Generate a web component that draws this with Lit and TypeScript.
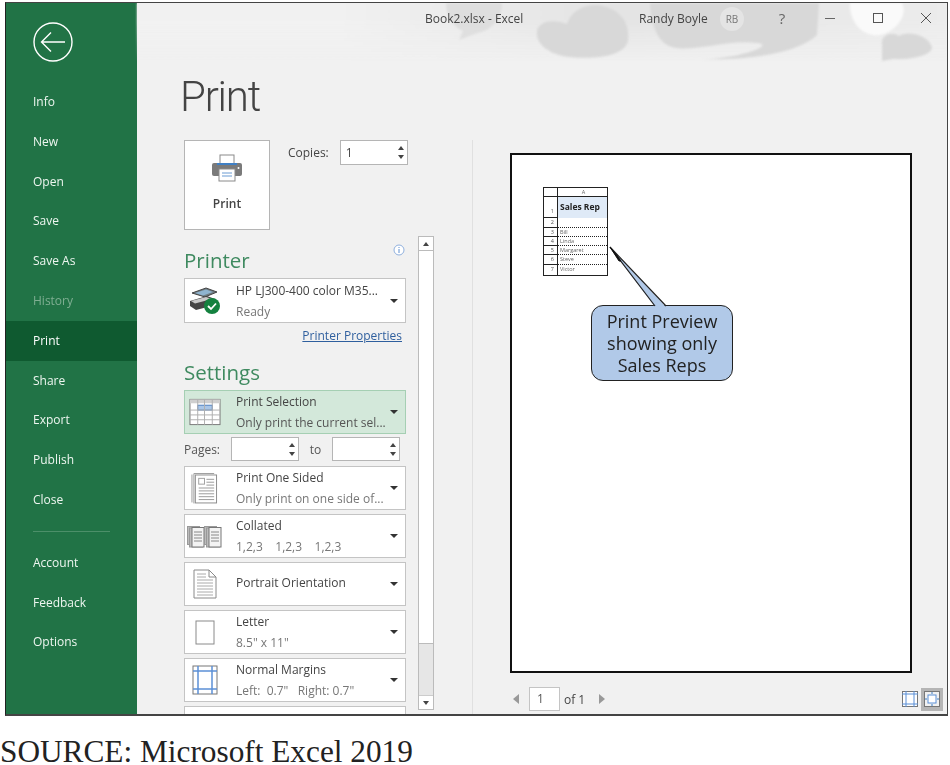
import { LitElement, html, css, svg } from 'lit';
import { customElement } from 'lit/decorators.js';

const TOP_NAV = ['Info', 'New', 'Open', 'Save', 'Save As', 'History', 'Print', 'Share', 'Export', 'Publish', 'Close'];
const BOTTOM_NAV = ['Account', 'Feedback', 'Options'];

const line = (x1: number, y1: number, x2: number, y2: number, c = '#8a8a8a', w = 1) =>
  svg`<line x1=${x1} y1=${y1} x2=${x2} y2=${y2} stroke=${c} stroke-width=${w} />`;

const ICONS: Record<string, unknown> = {
  printer: html`<svg width="32" height="28" viewBox="2 2 32 28">
    <path d="M5 8 L19 3 L30 7 L18 12Z" fill="#6f7b80" stroke="#444" />
    <path d="M8 8 L19 4.5 L26 7 L16 10.5Z" fill="#8fb4cf" />
    <path d="M3 16 L20 11 L28 14 L28 20 L9 25 L3 21Z" fill="#454545" />
    <path d="M4 16 L19 12 L25 14 L8 18.5Z" fill="#c9c9c9" />
    <circle cx="25" cy="21" r="8" fill="#14813f" />
    <path d="M21 21 L24 24 L29 18.5" fill="none" stroke="#fff" stroke-width="1.8" />
  </svg>`,
  selection: html`<svg width="32" height="28" viewBox="0 0 33 28">
    <rect x="1" y="1" width="31" height="26" fill="#fff" stroke="#777" />
    <rect x="1" y="1" width="31" height="4" fill="#cfcfcf" />
    <rect x="9" y="7" width="15" height="5" fill="#a9c6e8" stroke="#4d7fc0" />
    ${[12, 17, 22].map((y) => svg`${line(1, y, 32, y, '#b0b0b0')}`)}
    ${[9, 16, 24].map((x) => svg`${line(x, 1, x, 27, '#b0b0b0')}`)}
  </svg>`,
  oneSided: html`<svg width="27" height="34" viewBox="0 0 28 34">
    <path d="M1 32 V3 M3 33 V2 H24" fill="none" stroke="#9a9a9a" />
    <rect x="4.5" y="3.5" width="22" height="29" fill="#fff" stroke="#8a8a8a" />
    <rect x="8" y="7" width="6" height="6" fill="none" stroke="#a0a0a0" />
    ${[8, 11, 14].map((y) => svg`${line(16, y, 24, y, '#999')}`)}
    ${[17, 20, 23, 26, 29].map((y) => svg`${line(8, y, 24, y, '#999')}`)}
  </svg>`,
  collated: html`<svg width="35" height="24" viewBox="0 0 35 24">
    ${[0, 17].map((dx) => svg`
      <rect x=${dx + 0.5} y="2.5" width="12" height="18" fill="#bbb" stroke="#999" />
      <rect x=${dx + 2.5} y="4" width="13" height="19" fill="#bbb" stroke="#999" />
      <rect x=${dx + 5} y="3.5" width="12" height="19.5" fill="#f3f3f3" stroke="#777" />
      ${[8, 11, 14, 17].map((y) => line(dx + 7, y, dx + 15, y, '#888'))}
    `)}
  </svg>`,
  portrait: html`<svg width="24" height="30" viewBox="0 0 24 30">
    <path d="M1 1 H16 L23 8 V29 H1Z M16 1 V8 H23" fill="#fff" stroke="#8a8a8a" />
    ${[5, 8].map((y) => svg`${line(4, y, 13, y, '#aaa')}`)}
    ${[11, 14, 17, 20, 23, 26].map((y) => svg`${line(4, y, 20, y, '#aaa')}`)}
  </svg>`,
  letter: html`<svg width="20" height="25" viewBox="0 0 20 25">
    <rect x="1" y="1" width="18" height="23" fill="#fff" stroke="#8a8a8a" />
  </svg>`,
  margins: html`<svg width="26" height="30" viewBox="0 0 26 30">
    <rect x="1" y="1" width="24" height="28" fill="#fff" stroke="#777" />
    ${line(6, 1, 6, 29, '#5b8fd6', 1.5)}${line(20, 1, 20, 29, '#5b8fd6', 1.5)}
    ${line(1, 6, 25, 6, '#5b8fd6', 1.5)}${line(1, 24, 25, 24, '#5b8fd6', 1.5)}
  </svg>`,
};

const PRINTER = { icon: 'printer', title: 'HP LJ300-400 color M35...', sub: 'Ready' };
const SELECTION = { icon: 'selection', title: 'Print Selection', sub: 'Only print the current sel...' };
const OPTIONS = [
  { icon: 'oneSided', title: 'Print One Sided', sub: 'Only print on one side of...' },
  { icon: 'collated', title: 'Collated', sub: '1,2,3\u00a0\u00a0\u00a0\u00a01,2,3\u00a0\u00a0\u00a0\u00a01,2,3' },
  { icon: 'portrait', title: 'Portrait Orientation', sub: '' },
  { icon: 'letter', title: 'Letter', sub: '8.5" x 11"' },
  { icon: 'margins', title: 'Normal Margins', sub: 'Left:\u00a0\u00a00.7"\u00a0\u00a0\u00a0Right:\u00a00.7"' },
];
const SHEET_ROWS = ['Bill', 'Linda', 'Margaret', 'Steve', 'Victor'];

@customElement('app-root')
export class AppRoot extends LitElement {
  static styles = css`
    :host { display: block; width: 950px; height: 765px; background: #fff; font-family: 'Open Sans', 'Noto Sans', sans-serif; }
    .window { box-sizing: border-box; margin: 2px 0 0 5px; width: 943px; height: 714px; border: 1px solid #444; border-left-color: #222; border-bottom: 2px solid #444; display: flex; overflow: hidden; filter: blur(0.35px); }

    .sidebar { width: 131px; flex: none; background: #217346; color: #eef6f0; font-size: 12px; }
    .back { display: block; margin: 19px 0 20px 27px; }
    .nav-item { height: 39.8px; line-height: 39.8px; padding-left: 27px; }
    .nav-item.disabled { color: #7fae92; }
    .nav-item.active { background: #0f5a30; color: #fff; }
    .nav-rule { height: 1px; background: #4c8f69; margin: 11px 27px 11px 27px; }

    .main { flex: 1; position: relative; background: #f1f1f1; color: #444; font-size: 12px; min-width: 0; }
    .clouds { position: absolute; left: 0; top: 0; filter: blur(1px); }
    .titlebar { position: relative; height: 30px; line-height: 31px; display: flex; padding-left: 288px; color: #444; }
    .titlebar > * { flex: none; }
    .file { width: 214px; }
    .user { width: 81px; }
    .badge { width: 24px; height: 24px; line-height: 24px; margin-top: 4px; border-radius: 50%; background: #e4e4e4; color: #777; font-size: 10px; text-align: center; }
    .ctl { width: 48px; display: flex; align-items: center; justify-content: center; color: #666; font-size: 15px; }
    .ctl.first { margin-left: 14px; }

    .heading { position: relative; box-sizing: border-box; height: 107px; padding: 34px 0 0 43px; }
    h1 { margin: 0; font-family: Roboto, 'Open Sans', sans-serif; font-weight: 300; font-size: 42px; letter-spacing: -1.2px; line-height: 60px; color: #444; }

    .body { display: flex; height: 580px; padding-left: 47px; }
    .settings { width: 222px; flex: none; }
    .print-row { display: flex; height: 90px; margin-bottom: 15px; }
    .print-btn { box-sizing: border-box; flex: none; width: 86px; height: 90px; background: #fff; border: 1px solid #b5b5b5; display: flex; flex-direction: column; align-items: center; padding-top: 13px; font-weight: 600; color: #444; gap: 13px; }
    .copies { display: flex; flex: none; margin-left: 18px; gap: 11px; height: 25px; align-items: center; }
    .spin { box-sizing: border-box; background: #fff; border: 1px solid #b5b5b5; display: flex; justify-content: space-between; align-items: center; height: 25px; padding: 0 3px 0 5px; }
    .spin.copy { width: 68px; }
    .spin.range { width: 68px; height: 24px; }
    .arrows { display: flex; flex-direction: column; gap: 5px; }
    .up { width: 0; height: 0; border: 3px solid transparent; border-top: 0; border-bottom: 4px solid #444; }
    .down { width: 0; height: 0; border: 3px solid transparent; border-bottom: 0; border-top: 4px solid #444; }

    h2 { margin: 0; font-weight: 400; font-size: 20.5px; line-height: 30px; color: #3f8a60; }
    .section-head { display: flex; justify-content: space-between; margin-bottom: 3px; }
    .info { margin: -1px 1px 0 0; }
    .settings-head { margin: 12px 0 3px; }

    .drop { box-sizing: border-box; height: 45px; background: #fff; border: 1.5px solid #c4c4c4; display: flex; align-items: center; }
    .drop.small { height: 44px; }
    .drop.selected { background: #d3e8da; border-color: #a5cfb3; }
    .drop-icon { width: 39px; margin-right: 12px; flex: none; display: flex; justify-content: center; align-items: center; }
    .drop-text { flex: 1; min-width: 0; line-height: 21px; white-space: nowrap; }
    .drop-title { color: #444; font-weight: 500; }
    .drop-title.solo { margin-bottom: 3px; }
    .drop-sub { color: #777; }
    .drop.selected .drop-sub { color: #555; }
    .caret { flex: none; margin-right: 7px; width: 0; height: 0; border: 4px solid transparent; border-bottom: 0; border-top: 4px solid #333; }

    .props { text-align: right; padding-right: 4px; line-height: 18px; margin-top: 4px; color: #2f5f9e; text-decoration: underline; }
    .pages { display: flex; align-items: center; height: 24px; margin: 3px 0 5px; color: #555; }
    .pages-label { width: 47px; }
    .pages-to { width: 33px; text-align: center; }
    .stack { display: flex; flex-direction: column; gap: 4px; }

    .scroll { box-sizing: border-box; width: 16px; height: 474px; margin: 96px 0 0 12px; background: #e6e6e6; border: 1px solid #bbb; position: relative; display: flex; flex-direction: column; flex: none; }
    .scroll-btn { height: 14px; flex: none; background: #fff; display: flex; align-items: center; justify-content: center; box-sizing: border-box; }
    .scroll-btn.top { border-bottom: 1px solid #bbb; }
    .scroll-btn.bottom { border-top: 1px solid #ccc; margin-top: auto; }
    .thumb { height: 392px; background: #fff; border-bottom: 1px solid #bbb; }

    .preview { flex: 1; margin-left: 38px; border-left: 1px solid #e0e0e0; padding: 13px 0 0 37px; min-width: 0; }
    .page { box-sizing: border-box; position: relative; width: 402px; height: 520px; background: #fff; border: 2px solid #111; border-bottom-width: 2.5px; padding: 32px 0 0 31px; }
    .sheet { display: grid; grid-template-columns: 14px 49px; grid-template-rows: 9px 21px 10px 9px 9px 9px 10px 10px; width: 65px; border: 1.5px solid #222; box-sizing: border-box; font-size: 5.5px; color: #666; }
    .cell { box-sizing: border-box; border-bottom: 1px dotted #222; line-height: 8px; padding-left: 2px; white-space: nowrap; overflow: hidden; }
    .cell.num { border-right: 1.5px solid #222; border-bottom-style: solid; padding: 0 3px 0 0; text-align: right; color: #555; }
    .cell.head { border-bottom: 1px solid #222; text-align: center; }
    .cell.title { background: #dfeaf7; color: #222; font-size: 8.5px; font-weight: 700; line-height: 19px; border-bottom: 0; }
    .cell.num.tall { line-height: 28px; }
    .cell.last { border-bottom: 0; }

    .callout { position: absolute; left: 79px; top: 150px; box-sizing: border-box; width: 142px; height: 76px; background: #b1c9e8; border: 1.5px solid #222; border-radius: 12px; display: flex; align-items: center; justify-content: center; text-align: center; font-size: 18px; line-height: 22px; color: #222; }
    .pointer { position: absolute; left: 95px; top: 90px; }

    .pager { display: flex; align-items: center; width: 433px; height: 24px; margin-top: 14px; color: #444; }
    .pg-left { width: 0; height: 0; margin-left: 3px; border: 5px solid transparent; border-left: 0; border-right: 6px solid #999; }
    .pg-right { width: 0; height: 0; margin-left: 14px; border: 5px solid transparent; border-right: 0; border-left: 6px solid #999; }
    .pg-box { box-sizing: border-box; width: 31px; height: 24px; line-height: 22px; margin: 0 4px 0 10px; background: #fff; border: 1px solid #c4c4c4; padding-left: 7px; color: #555; }
    .view { margin-left: auto; display: flex; align-items: center; gap: 3px; }
    .view-on { width: 22px; height: 23px; background: #b5b5b5; display: flex; align-items: center; justify-content: center; }

    .source { margin: 23px 0 0; font-family: 'Liberation Serif', serif; font-size: 31.3px; line-height: 26px; color: #222; white-space: nowrap; }
  `;

  private option(o: { icon: string; title: string; sub: string }, cls = '') {
    return html`<div class="drop ${cls}">
      <div class="drop-icon">${ICONS[o.icon]}</div>
      <div class="drop-text">
        <div class="drop-title ${o.sub ? '' : 'solo'}">${o.title}</div>
        ${o.sub ? html`<div class="drop-sub">${o.sub}</div>` : ''}
      </div>
      <div class="caret"></div>
    </div>`;
  }

  private arrows() {
    return html`<div class="arrows"><div class="up"></div><div class="down"></div></div>`;
  }

  private sheet() {
    return html`<div class="sheet">
      <div class="cell num head"></div><div class="cell head">A</div>
      <div class="cell num tall">1</div><div class="cell title">Sales Rep</div>
      <div class="cell num">2</div><div class="cell"></div>
      ${SHEET_ROWS.map((name, i) => html`
        <div class="cell num ${i === 4 ? 'last' : ''}">${i + 3}</div>
        <div class="cell ${i === 4 ? 'last' : ''}">${name}</div>`)}
    </div>`;
  }

  render() {
    return html`
      <div class="window">
        <nav class="sidebar">
          <svg class="back" width="40" height="40" viewBox="0 0 40 40" fill="none" stroke="#fff" stroke-width="1.4">
            <circle cx="20" cy="20" r="19" />
            <path d="M32 20 H9 M18 10.5 L8.5 20 L18 29.5" />
          </svg>
          ${TOP_NAV.map((n) => html`<div class="nav-item ${n === 'Print' ? 'active' : ''} ${n === 'History' ? 'disabled' : ''}">${n}</div>`)}
          <div class="nav-rule"></div>
          ${BOTTOM_NAV.map((n) => html`<div class="nav-item">${n}</div>`)}
        </nav>

        <main class="main">
          <svg class="clouds" width="810" height="62" viewBox="0 0 810 62">
            <defs>
              <linearGradient id="band" x1="0" y1="0" x2="1" y2="0">
                <stop offset="0.25" stop-color="#f1f1f1" />
                <stop offset="0.6" stop-color="#e4e4e4" />
                <stop offset="1" stop-color="#ececec" />
              </linearGradient>
              <linearGradient id="fade" x1="0" y1="0" x2="0" y2="1">
                <stop offset="0.3" stop-color="#fff" />
                <stop offset="0.95" stop-color="#000" />
              </linearGradient>
              <mask id="fade-mask"><rect width="810" height="62" fill="url(#fade)" /></mask>
            </defs>
            <rect width="810" height="62" fill="url(#band)" mask="url(#fade-mask)" />
            <g fill="#d8d8d8">
              <path d="M309 0 C309 12 316 24 326 28 L322 37 L340 30 C354 28 365 16 365 0Z" opacity="0.7" />
              <path d="M400 28 C402 18 416 16 430 21 C434 8 446 2 460 2 C482 4 494 20 491 38 C488 52 462 57 432 54 C414 52 398 42 400 28Z" />
              <path d="M513 0 C514 20 520 40 535 44 C555 50 590 36 620 40 C640 42 600 56 565 56 C600 58 660 52 680 32 L682 0Z" />
              <path d="M745 42 C743 32 755 28 762 33 C768 28 790 30 795 44 C796 52 775 57 756 56 L745 58Z" />
            </g>
            <path d="M713 0 H765 C772 14 756 30 742 32 C725 34 712 18 713 0Z" fill="#fafafa" />
          </svg>

          <header class="titlebar">
            <span class="file">Book2.xlsx - Excel</span>
            <span class="user">Randy Boyle</span>
            <span class="badge">RB</span>
            <span class="ctl first">?</span>
            <span class="ctl"><svg width="12" height="12"><path d="M1 6.5H11" stroke="#666" /></svg></span>
            <span class="ctl"><svg width="12" height="12"><rect x="1.5" y="1.5" width="9" height="9" fill="none" stroke="#555" /></svg></span>
            <span class="ctl"><svg width="12" height="12"><path d="M1 1L11 11M11 1L1 11" stroke="#555" /></svg></span>
          </header>

          <div class="heading"><h1>Print</h1></div>

          <div class="body">
            <section class="settings">
              <div class="print-row">
                <div class="print-btn">
                  <svg width="32" height="28" viewBox="0 0 32 28">
                    <rect x="9" y="1" width="14" height="9" fill="#fff" stroke="#8a8a8a" />
                    <rect x="1" y="9" width="30" height="13" rx="2" fill="#7a7a7a" />
                    <rect x="6" y="9" width="20" height="2" fill="#3f7fc4" />
                    <rect x="8" y="15" width="16" height="12" fill="#fff" stroke="#8a8a8a" />
                    <path d="M11 19H21M11 22H21" stroke="#6b9bd3" />
                    <circle cx="27.5" cy="14" r="1" fill="#fff" />
                  </svg>
                  Print
                </div>
                <div class="copies">
                  <span>Copies:</span>
                  <div class="spin copy"><span>1</span>${this.arrows()}</div>
                </div>
              </div>

              <div class="section-head">
                <h2>Printer</h2>
                <svg class="info" width="12" height="12" viewBox="0 0 12 12">
                  <circle cx="6" cy="6" r="5" fill="#fff" stroke="#8fb0de" />
                  <path d="M6 5V9M6 3V4" stroke="#5f8fd0" />
                </svg>
              </div>
              ${this.option(PRINTER)}
              <div class="props">Printer Properties</div>

              <h2 class="settings-head">Settings</h2>
              ${this.option(SELECTION, 'small selected')}
              <div class="pages">
                <span class="pages-label">Pages:</span>
                <div class="spin range"><span></span>${this.arrows()}</div>
                <span class="pages-to">to</span>
                <div class="spin range"><span></span>${this.arrows()}</div>
              </div>
              <div class="stack">
                ${OPTIONS.map((o) => this.option(o, 'small'))}
                <div class="drop small"></div>
              </div>
            </section>

            <div class="scroll">
              <div class="scroll-btn top"><div class="up"></div></div>
              <div class="thumb"></div>
              <div class="scroll-btn bottom"><div class="down"></div></div>
            </div>

            <section class="preview">
              <div class="page">
                ${this.sheet()}
                <div class="callout"><div>Print Preview<br />showing only<br />Sales Reps</div></div>
                <svg class="pointer" width="66" height="64" viewBox="0 0 66 64">
                  <path d="M3 2 L48 62 L59 62Z" fill="#b1c9e8" />
                  <path d="M48 61 L3 2 L59 61" fill="none" stroke="#222" stroke-width="1.2" />
                  <path d="M3 2 L14 16 L12 16Z" fill="#111" stroke="#111" />
                </svg>
              </div>
              <div class="pager">
                <div class="pg-left"></div>
                <div class="pg-box">1</div>
                <span>of 1</span>
                <div class="pg-right"></div>
                <div class="view">
                  <svg width="16" height="16" viewBox="0 0 16 16">
                    <rect x="0.5" y="0.5" width="15" height="15" fill="#fff" stroke="#777" />
                    <path d="M4 0V16M12 0V16M0 3H16M0 13H16" stroke="#5b8fd6" />
                  </svg>
                  <div class="view-on">
                    <svg width="16" height="16" viewBox="0 0 16 16">
                      <rect x="0.5" y="0.5" width="15" height="15" fill="#f1f1f1" stroke="#777" />
                      <rect x="4" y="4" width="8" height="8" fill="#fff" stroke="#5b8fd6" />
                      <path d="M8 1V3M8 13V15M1 8H3M13 8H15" stroke="#3f7fc4" />
                    </svg>
                  </div>
                </div>
              </div>
            </section>
          </div>
        </main>
      </div>
      <p class="source">SOURCE: Microsoft Excel 2019</p>
    `;
  }
}
